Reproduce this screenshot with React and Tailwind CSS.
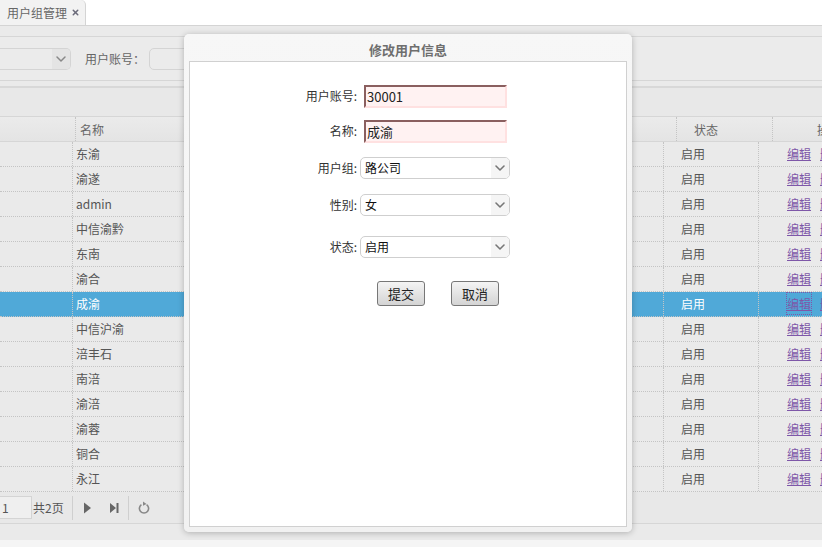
import React from "react";
import { ChevronDown, X } from "lucide-react";

const names = ["东渝","渝遂","admin","中信渝黔","东南","渝合","成渝","中信沪渝","涪丰石","南涪","渝涪","渝蓉","铜合","永江"];

function Row({ name, selected }) {
  return (
    <div className={"flex h-[25px] border-b border-dotted border-[#c4c4c4] " + (selected ? "bg-[#50a9d8] text-white" : "text-[#555]")}>
      <div className="w-[73px] shrink-0 border-r border-dotted border-[#c4c4c4]" />
      <div className="w-[591px] shrink-0 border-r border-dotted border-[#c4c4c4] pl-[3px] leading-[24px]">{name}</div>
      <div className="w-[95px] shrink-0 border-r border-dotted border-[#c4c4c4] pl-[17px] leading-[24px]">启用</div>
      <div className="flex flex-1 pl-[28px] leading-[24px] text-[#7e57a8] underline whitespace-nowrap overflow-hidden">
        <span className={selected ? "h-[21px] mt-[1px] leading-[21px] outline-1 outline-dotted outline-[#7e57a8]" : ""}>编辑</span>
        <span className="ml-[9px]">删除</span>
      </div>
    </div>
  );
}

function Sel({ value, mt }) {
  return (
    <div className={"flex items-center " + mt}>
      <div className="w-[168px] pr-[1px] text-right text-[#333]">{value[0]}:</div>
      <div className="ml-[2px] flex h-[22px] w-[150px] items-center overflow-hidden rounded-[5px] border border-[#cfcfcf] bg-white pl-[4px] text-[#111]">
        <span className="flex-1">{value[1]}</span>
        <span className="flex h-full w-[18px] items-center justify-center bg-[#f5f5f5]">
          <ChevronDown size={16} strokeWidth={2.4} className="text-[#777]" />
        </span>
      </div>
    </div>
  );
}

function Inp({ label, value, mt }) {
  return (
    <div className={"flex items-center " + mt}>
      <div className="-mt-[2px] w-[168px] pr-[1px] text-right text-[#333]">{label}:</div>
      <div className="ml-[6px] h-[23px] w-[143px] border-2 border-[#ffe1e1] border-t-[#8a5f5f] border-l-[#8a5f5f] bg-[#fff2f2] pl-[1px] text-[13px] leading-[19px] text-[#222]">{value}</div>
    </div>
  );
}

function Btn({ children }) {
  return (
    <div className="flex h-[25px] w-[48px] items-center justify-center rounded-[3px] border border-[#777] bg-gradient-to-b from-[#f4f4f4] to-[#d4d4d4] text-[13px] text-[#222]">{children}</div>
  );
}

export default function App() {
  return (
    <div className="relative h-[547px] w-[822px] overflow-hidden bg-[#f5f5f5] text-xs" style={{ fontFamily: '"Noto Sans CJK SC", "DejaVu Sans", sans-serif' }}>
      <div className="flex h-[26px] border-b border-[#d4d4d4] bg-white">
        <div className="flex h-[25px] w-[86px] items-center rounded-tr-[5px] border-r border-[#d4d4d4] bg-[#f2f2f2] pl-[7px] text-[#666]">
          <span>用户组管理</span>
          <X size={9} strokeWidth={4} className="ml-[4px] text-[#6a6a7a]" />
        </div>
      </div>

      <div className="h-[514px] bg-[#eaeaea]">
        <div className="h-[10px]" />
        <div className="flex h-[45px] items-center border-y border-[#d6d6d6] bg-[#ebebeb]">
          <div className="flex h-[22px] w-[71px] items-center justify-end overflow-hidden rounded-r-[5px] border border-l-0 border-[#d4d4d4]">
            <span className="flex h-full w-[18px] items-center justify-center bg-[#e4e4e4]">
              <ChevronDown size={16} strokeWidth={2.2} className="text-[#888]" />
            </span>
          </div>
          <span className="ml-[14px] text-[#666]">用户账号：</span>
          <div className="ml-[4px] h-[22px] w-[60px] rounded-[5px] border border-[#d4d4d4]" />
        </div>
        <div className="h-[7px] border-b-2 border-[#d8d8d8]" />
        <div className="h-[29px] border-b border-[#d6d6d6] bg-[#e8e8e8]" />
        <div className="flex h-[25px] border-b border-[#d6d6d6] bg-gradient-to-b from-[#ebebeb] to-[#e4e4e4] leading-[25px] text-[#666]">
          <div className="w-[76px] shrink-0 border-r border-dotted border-[#c4c4c4]" />
          <div className="w-[601px] shrink-0 border-r border-dotted border-[#c4c4c4] pl-[4px]">名称</div>
          <div className="w-[96px] shrink-0 border-r border-dotted border-[#c4c4c4] pl-[17px]">状态</div>
          <div className="flex-1 overflow-hidden whitespace-nowrap pl-[44px]">操作</div>
        </div>
        {names.map((n, i) => <Row key={n} name={n} selected={i === 6} />)}
        <div className="flex h-[32px] items-center border-b border-[#d6d6d6] bg-[#e8e8e8] text-[#555]">
          <div className="h-[23px] w-[32px] border border-l-0 border-[#d4d4d4] bg-[#efefef] pl-[2px] leading-[22px]">1</div>
          <span className="ml-[1px] w-[39px] text-[12px]">共2页</span>
          <span className="h-[24px] w-px bg-[#cfcfcf]" />
          <svg width="10" height="12" viewBox="0 0 10 12" className="ml-[10px] text-[#666]"><path d="M1 0.5l7 5.5-7 5.5z" fill="currentColor" /></svg>
          <svg width="10" height="12" viewBox="0 0 10 12" className="ml-[16px] text-[#666]"><path d="M1 1l6 5-6 5zM7.5 1h2v10h-2z" fill="currentColor" /></svg>
          <span className="ml-[9px] h-[24px] w-px bg-[#cfcfcf]" />
          <svg width="12" height="13" viewBox="0 0 12 13" className="ml-[9px] text-[#888]">
            <path d="M3.4 3.6a4.6 4.6 0 1 0 5.2 0" fill="none" stroke="currentColor" strokeWidth="1.6" />
            <path d="M5 0.5l3.5 2.5-3.5 1.8z" fill="currentColor" />
          </svg>
        </div>
      </div>

      <div className="absolute left-[184px] top-[34px] flex h-[498px] w-[448px] flex-col rounded-[5px] bg-gradient-to-b from-[#f7f7f7] to-[#f1f1f1] px-[5px] pb-[5px] shadow-[0_1px_6px_rgba(0,0,0,0.25)]">
        <div className="h-[27px] pt-[7px] text-center text-[13px] font-bold leading-[17px] text-[#6e6e6e]">修改用户信息</div>
        <div className="flex-1 border border-[#d0d0d0] bg-white pt-[23px]">
          <Inp label="用户账号" value="30001" mt="" />
          <Inp label="名称" value="成渝" mt="mt-[12px]" />
          <Sel value={["用户组", "路公司"]} mt="mt-[14px]" />
          <Sel value={["性别", "女"]} mt="mt-[15px]" />
          <Sel value={["状态", "启用"]} mt="mt-[20px]" />
          <div className="mt-[23px] flex gap-[26px] pl-[187px]">
            <Btn>提交</Btn>
            <Btn>取消</Btn>
          </div>
        </div>
      </div>
    </div>
  );
}
